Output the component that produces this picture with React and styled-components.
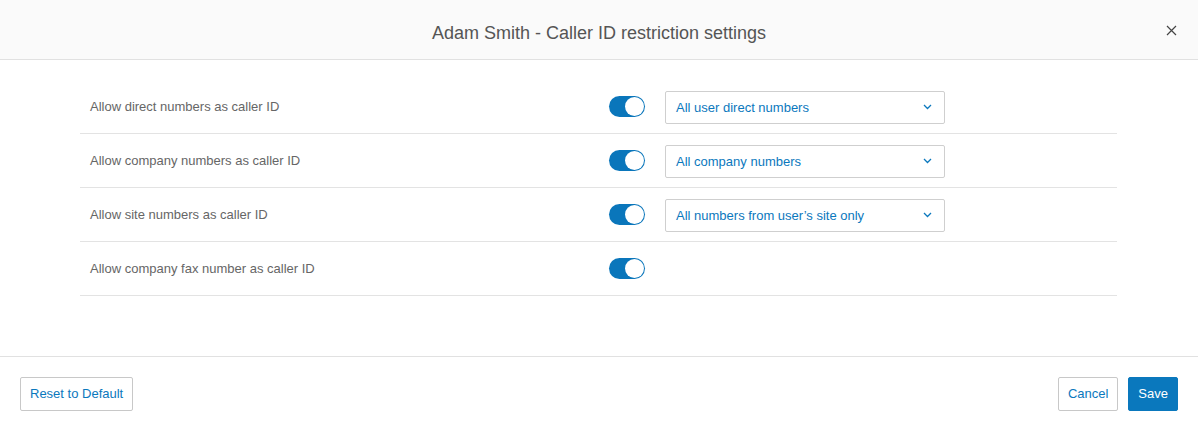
import React from 'react';
import styled, { createGlobalStyle } from 'styled-components';

const GlobalStyle = createGlobalStyle`
  html, body {
    margin: 0;
    padding: 0;
    background: #fff;
    font-family: 'Liberation Sans', Arial, sans-serif;
  }
`;

const rows = [
  { label: 'Allow direct numbers as caller ID', value: 'All user direct numbers' },
  { label: 'Allow company numbers as caller ID', value: 'All company numbers' },
  { label: 'Allow site numbers as caller ID', value: 'All numbers from user\u2019s site only' },
  { label: 'Allow company fax number as caller ID' },
];

const Modal = styled.div`
  width: 1198px;
  height: 430px;
  display: flex;
  flex-direction: column;
  background: #fff;
`;

const Header = styled.div`
  height: 59px;
  display: flex;
  align-items: center;
  justify-content: center;
  position: relative;
  background: #fafafa;
  border-bottom: 1px solid #e1e1e1;
`;

const Title = styled.h2`
  margin: 0;
  font-size: 18px;
  font-weight: 400;
  color: #555;
  padding-top: 7px;
`;

const Close = styled.button`
  position: absolute;
  right: 18px;
  top: 21px;
  width: 18px;
  height: 18px;
  padding: 0;
  border: 0;
  background: none;
  display: flex;
  align-items: center;
  justify-content: center;
  cursor: pointer;
`;

const Body = styled.div`
  flex: 1;
  padding: 20px 81px 0 80px;
`;

const Row = styled.div`
  height: 53px;
  display: grid;
  grid-template-columns: 529px 56px 280px;
  align-items: center;
  border-bottom: 1px solid #e3e3e3;
`;

const Label = styled.span`
  padding-left: 10px;
  font-size: 13px;
  color: #666;
`;

const Toggle = styled.span`
  width: 36px;
  height: 21px;
  border-radius: 11px;
  background: #0a76bb;
  position: relative;
  display: block;

  &::after {
    content: '';
    position: absolute;
    right: 1px;
    top: 1px;
    width: 19px;
    height: 19px;
    box-sizing: border-box;
    border-radius: 50%;
    background: #fff;
  }
`;

const Select = styled.div`
  height: 33px;
  margin-top: 1px;
  box-sizing: border-box;
  border: 1px solid #cfcfcf;
  border-radius: 2px;
  display: flex;
  align-items: center;
  justify-content: space-between;
  padding: 0 12px 0 10px;
  font-size: 13px;
  color: #0b78bd;
`;

const Footer = styled.div`
  height: 74px;
  border-top: 1px solid #e1e1e1;
  display: flex;
  align-items: center;
  justify-content: space-between;
  padding: 0 20px;
  box-sizing: border-box;
`;

const Group = styled.div`
  display: flex;
  gap: 10px;
`;

const Button = styled.button`
  height: 34px;
  padding: 0 ${p => (p.$primary ? 9 : 9)}px;
  font-family: inherit;
  font-size: 13px;
  border-radius: 2px;
  border: 1px solid ${p => (p.$primary ? '#0a78bd' : '#c8c8c8')};
  background: ${p => (p.$primary ? '#0a78bd' : '#fff')};
  color: ${p => (p.$primary ? '#fff' : '#0b78bd')};
  cursor: pointer;
`;

const Chevron = () => (
  <svg width="9" height="6" viewBox="0 0 9 6">
    <path d="M1 1l3.5 3.5L8 1" fill="none" stroke="#0b78bd" strokeWidth="1.3" />
  </svg>
);

export default function App() {
  return (
    <>
      <GlobalStyle />
      <Modal>
        <Header>
          <Title>Adam Smith - Caller ID restriction settings</Title>
          <Close aria-label="Close">
            <svg width="11" height="11" viewBox="0 0 11 11">
              <path d="M1 1l9 9M10 1l-9 9" stroke="#444" strokeWidth="1.2" />
            </svg>
          </Close>
        </Header>
        <Body>
          {rows.map(r => (
            <Row key={r.label}>
              <Label>{r.label}</Label>
              <Toggle />
              {r.value ? (
                <Select>
                  {r.value}
                  <Chevron />
                </Select>
              ) : <span />}
            </Row>
          ))}
        </Body>
        <Footer>
          <Button>Reset to Default</Button>
          <Group>
            <Button>Cancel</Button>
            <Button $primary>Save</Button>
          </Group>
        </Footer>
      </Modal>
    </>
  );
}
